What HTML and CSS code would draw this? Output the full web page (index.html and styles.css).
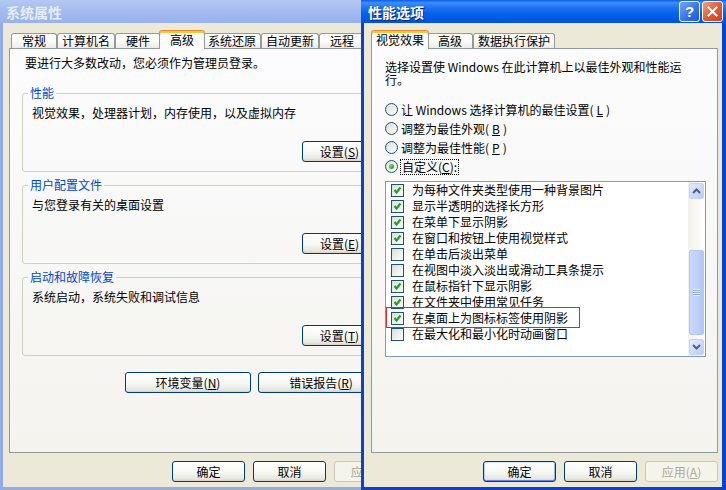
FILE: index.html
```html
<!DOCTYPE html>
<html lang="zh-cn">
  <head>
    <meta charset="utf8">
    <meta name="viewport" content="width=device-width, initial-scale=1">
    <title>系统属性 - 性能选项</title>
    <link rel="stylesheet" href="styles.css">
  </head>

  <body>
    <div class="desktop">

      <section class="window inactive sysprops">
        <header class="titlebar">
          <span class="caption">系统属性</span>
        </header>
        <div class="window-body">
          <ul class="tabs">
            <li class="tab">常规</li>
            <li class="tab">计算机名</li>
            <li class="tab">硬件</li>
            <li class="tab selected">高级</li>
            <li class="tab">系统还原</li>
            <li class="tab">自动更新</li>
            <li class="tab">远程</li>
          </ul>

          <div class="tab-panel">
            <p class="intro">要进行大多数改动，您必须作为管理员登录。</p>

            <fieldset class="group">
              <legend>性能</legend>
              <p>视觉效果，处理器计划，内存使用，以及虚拟内存</p>
              <div class="group-actions"><button class="btn">设置(<u>S</u>)</button></div>
            </fieldset>

            <fieldset class="group">
              <legend>用户配置文件</legend>
              <p>与您登录有关的桌面设置</p>
              <div class="group-actions"><button class="btn">设置(<u>E</u>)</button></div>
            </fieldset>

            <fieldset class="group">
              <legend>启动和故障恢复</legend>
              <p>系统启动，系统失败和调试信息</p>
              <div class="group-actions"><button class="btn">设置(<u>T</u>)</button></div>
            </fieldset>

            <div class="panel-actions">
              <button class="btn btn-wide">环境变量(<u>N</u>)</button>
              <button class="btn btn-wide">错误报告(<u>R</u>)</button>
            </div>
          </div>

          <div class="dialog-buttons">
            <button class="btn">确定</button>
            <button class="btn">取消</button>
            <button class="btn" disabled>应用(<u>A</u>)</button>
          </div>
        </div>
      </section>

      <section class="window perf">
        <header class="titlebar">
          <span class="caption">性能选项</span>
          <div class="title-buttons">
            <span class="title-btn help-btn">?</span>
            <span class="title-btn close-btn">
              <svg width="11" height="11" viewBox="0 0 11 11"><path d="M1.5 1.5 L9.5 9.5 M9.5 1.5 L1.5 9.5" stroke="#fff" stroke-width="2" stroke-linecap="square"/></svg>
            </span>
          </div>
        </header>
        <div class="window-body">
          <ul class="tabs">
            <li class="tab selected">视觉效果</li>
            <li class="tab">高级</li>
            <li class="tab">数据执行保护</li>
          </ul>

          <div class="tab-panel">
            <div class="perf-intro">
              <span class="line">选择设置使 Windows 在此计算机上以最佳外观和性能运</span>
              <span class="line">行。</span>
            </div>

            <div class="radios">
              <label class="radio"><span class="radio-mark"></span>让 Windows 选择计算机的最佳设置(<u>L</u>)</label>
              <label class="radio"><span class="radio-mark"></span>调整为最佳外观(<u>B</u>)</label>
              <label class="radio"><span class="radio-mark"></span>调整为最佳性能(<u>P</u>)</label>
              <label class="radio"><span class="radio-mark checked"></span><span class="focus">自定义(<u>C</u>):</span></label>
            </div>

            <div class="listbox">
              <ul class="options">
                <li class="option"><span class="check on"></span>为每种文件夹类型使用一种背景图片</li>
                <li class="option"><span class="check on"></span>显示半透明的选择长方形</li>
                <li class="option"><span class="check on"></span>在菜单下显示阴影</li>
                <li class="option"><span class="check on"></span>在窗口和按钮上使用视觉样式</li>
                <li class="option"><span class="check"></span>在单击后淡出菜单</li>
                <li class="option"><span class="check"></span>在视图中淡入淡出或滑动工具条提示</li>
                <li class="option"><span class="check on"></span>在鼠标指针下显示阴影</li>
                <li class="option"><span class="check on"></span>在文件夹中使用常见任务</li>
                <li class="option"><span class="check on"></span>在桌面上为图标标签使用阴影</li>
                <li class="option"><span class="check"></span>在最大化和最小化时动画窗口</li>
              </ul>

              <div class="scrollbar">
                <span class="scroll-btn">
                  <svg width="9" height="6" viewBox="0 0 9 6"><path d="M1 5 L4.5 1.5 L8 5" fill="none" stroke="#4d6185" stroke-width="2"/></svg>
                </span>
                <div class="scroll-track">
                  <span class="scroll-thumb" style="margin-top: 51px; height: 85px;"></span>
                </div>
                <span class="scroll-btn">
                  <svg width="9" height="6" viewBox="0 0 9 6"><path d="M1 1 L4.5 4.5 L8 1" fill="none" stroke="#4d6185" stroke-width="2"/></svg>
                </span>
              </div>

              <div class="annotation"></div>
            </div>
          </div>

          <div class="dialog-buttons">
            <button class="btn default">确定</button>
            <button class="btn">取消</button>
            <button class="btn" disabled>应用(<u>A</u>)</button>
          </div>
        </div>
      </section>

    </div>
  </body>
</html>
```

FILE: styles.css
```css
* {
  box-sizing: border-box;
}

html, body {
  margin: 0;
}

body {
  font-family: "Noto Sans CJK SC", "Liberation Sans", sans-serif;
  font-size: 12px;
  line-height: 14px;
  color: #000;
  background-color: #3a6ea5;
}

p {
  margin: 0;
}

.desktop {
  position: relative;
  width: 726px;
  height: 490px;
  overflow: hidden;
}

/* windows */

.window {
  position: absolute;
  top: 0;
  height: 490px;
  display: flex;
  flex-direction: column;
}

.sysprops {
  left: 0;
  width: 416px;
}

.perf {
  left: 361px;
  width: 365px;
  z-index: 1;
}

.titlebar {
  flex: none;
  height: 23px;
  display: flex;
  align-items: center;
  padding: 0 3px 0 7px;
  background: linear-gradient(#0a5ee6, #3d8df7 12%, #1a72f2 35%, #0462ea 60%, #0058e2 85%, #0052dc);
}

.caption {
  font-size: 14px;
  font-weight: bold;
  color: #fff;
  text-shadow: 1px 1px #0a1f7a;
}

.window-body {
  flex: 1;
  display: flex;
  flex-direction: column;
  padding: 7px 4px 5px 7px;
  background-color: #ece9d8;
  border: 0 solid #0842d4;
  border-width: 0 4px 3px 3px;
}

.inactive .titlebar {
  padding-left: 6px;
  background: linear-gradient(#b4c8f3, #a6bdf0 40%, #97b2ec);
}
.inactive .caption {
  color: #e6edfb;
  text-shadow: none;
}
.inactive .window-body {
  padding: 7px 6px 5px;
  border-color: #93ace8;
  border-width: 0 3px 3px;
}

.title-buttons {
  margin-left: auto;
  display: flex;
  gap: 2px;
}

.title-btn {
  width: 21px;
  height: 21px;
  display: flex;
  align-items: center;
  justify-content: center;
  border: 1px solid #fff;
  border-radius: 3px;
}

.help-btn {
  color: #fff;
  font: bold 15px "Liberation Sans", sans-serif;
  background: linear-gradient(135deg, #7aa6f8, #3a72ea 55%, #2259dc);
}

.close-btn {
  background: linear-gradient(135deg, #f3a085, #e2582f 55%, #cc4220);
}

/* tabs */

.tabs {
  display: flex;
  align-items: flex-end;
  height: 19px;
  margin: 0 0 -1px;
  padding: 0 0 0 2px;
  list-style: none;
  position: relative;
  z-index: 1;
}

.tab {
  height: 15px;
  min-width: 46px;
  margin-bottom: 1px;
  padding: 0 4px;
  border: 1px solid #919b9c;
  border-bottom: 0;
  border-radius: 3px 3px 0 0;
  background: linear-gradient(#fff, #fbfbf9 50%, #ecebe6);
  text-align: center;
  line-height: 14px;
  white-space: nowrap;
}

.tab.selected {
  height: 19px;
  margin: 0 -2px;
  border-top-color: #e68b2c;
  background: #fcfcfe;
  box-shadow: inset 0 2px #ffc73c;
  line-height: 16px;
  padding-top: 1px;
  position: relative;
  z-index: 1;
}

.tab-panel {
  flex: 1;
  border: 1px solid #919b9c;
  background: linear-gradient(#fcfcfe, #f4f3ee);
}

.sysprops .tab-panel {
  padding: 7px 12px 0;
}

.perf .tab-panel {
  padding: 11px 11px 0 13px;
}

/* buttons */

.btn {
  height: 21px;
  width: 73px;
  padding: 0;
  font: inherit;
  color: #000;
  border: 1px solid #003c74;
  border-radius: 3px;
  background: linear-gradient(#fff, #f7f7f4 55%, #e6e5dd 90%, #d6d0c5);
}

.btn:disabled {
  color: #aca899;
  border-color: #c9c7ba;
  background: #f5f4ea;
}

.btn.default {
  box-shadow: inset 0 1px #cee7ff, inset 0 -1px #6982ee, inset 1px 0 #b5cdf6, inset -1px 0 #8fb0ea;
}

.btn-wide {
  width: 126px;
}

.dialog-buttons {
  display: flex;
  justify-content: flex-end;
  gap: 8px;
  margin-top: 8px;
}

/* system properties panel */

.sysprops .intro {
  margin-left: 3px;
}

.group {
  margin: 6px 0 0;
  padding: 0 16px 9px 9px;
  border: 1px solid #d0d0bf;
  border-radius: 3px;
}

.group:first-of-type {
  margin-top: 16px;
}

.group legend {
  margin-left: -4px;
  padding: 0 2px;
  color: #0046d5;
}

.group p {
  margin-top: 6px;
}

.group-actions {
  display: flex;
  justify-content: flex-end;
  margin-top: 21px;
}

.group .btn {
  width: 75px;
}

.panel-actions {
  display: flex;
  justify-content: flex-end;
  gap: 7px;
  margin-top: 16px;
  padding-right: 10px;
}

/* performance options panel */

.perf-intro .line {
  display: block;
  height: 13px;
  line-height: 13px;
  white-space: nowrap;
}

.radios {
  margin-top: 14px;
}

.radio {
  height: 19px;
  display: flex;
  align-items: center;
  gap: 3px;
}

.radio-mark {
  width: 13px;
  height: 13px;
  border: 1px solid #1c5180;
  border-radius: 50%;
  background: linear-gradient(135deg, #dcdcd7, #fff);
  display: flex;
  align-items: center;
  justify-content: center;
}

.radio-mark.checked::after {
  content: "";
  width: 5px;
  height: 5px;
  border-radius: 50%;
  background: radial-gradient(circle at 35% 35%, #7fd77f, #21a121 70%);
}

.focus {
  outline: 1px dotted #000;
  outline-offset: 0;
  padding: 0 1px;
}

.listbox {
  position: relative;
  display: flex;
  height: 176px;
  margin-top: 5px;
  border: 1px solid #7f9db9;
  background: #fff;
}

.options {
  flex: 1;
  margin: 0;
  padding: 0 0 0 5px;
  list-style: none;
}

.option {
  height: 16px;
  display: flex;
  align-items: center;
  gap: 8px;
  white-space: nowrap;
}

.check {
  flex: none;
  width: 13px;
  height: 13px;
  border: 1px solid #1c5180;
  background: linear-gradient(135deg, #dcdcd7, #fff);
}

.check.on {
  background: url("data:image/svg+xml,%3Csvg xmlns='http://www.w3.org/2000/svg' width='11' height='11'%3E%3Cpath d='M2.5 5 L4.5 7.5 L8.5 2.5' fill='none' stroke='%2321a121' stroke-width='2.2'/%3E%3C/svg%3E") no-repeat center, linear-gradient(135deg, #dcdcd7, #fff);
}

.scrollbar {
  flex: none;
  width: 17px;
  display: flex;
  flex-direction: column;
  padding: 1px;
  background: linear-gradient(to right, #f3f1ec, #fefefb);
}

.scroll-btn {
  flex: none;
  height: 16px;
  display: flex;
  align-items: center;
  justify-content: center;
  border: 1px solid #c3d3fd;
  border-radius: 2px;
  background: linear-gradient(135deg, #e3ebfe, #b9cdf8);
}

.scroll-track {
  flex: 1;
  display: flex;
  flex-direction: column;
}

.scroll-thumb {
  display: flex;
  align-items: center;
  justify-content: center;
  border: 1px solid #b4c8f6;
  border-radius: 2px;
  background: linear-gradient(to right, #c9d8fc, #bdd0fb 60%, #b0c6f8);
}

.scroll-thumb::after {
  content: "";
  width: 7px;
  height: 7px;
  background: repeating-linear-gradient(#eef3fe 0 1px, #8aa5e6 1px 2px);
}

.annotation {
  position: absolute;
  left: 0;
  top: 125px;
  width: 194px;
  height: 21px;
  border: 1px solid #d42a2a;
}
```
